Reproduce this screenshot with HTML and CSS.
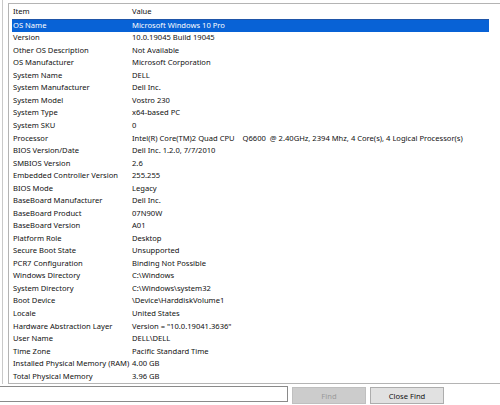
FILE: index.html
```html
<!DOCTYPE html>
<html>
<head>
<meta charset="utf-8">
<link rel="stylesheet" href="styles.css">
</head>
<body>
<div class="window">
  <div class="main">
    <div class="tree-edge"></div>
    <div class="list">
      <div class="row header"><span class="c1">Item</span><span class="c2">Value</span></div>
      <div class="row selected"><span class="c1">OS Name</span><span class="c2">Microsoft Windows 10 Pro</span></div>
      <div class="row"><span class="c1">Version</span><span class="c2">10.0.19045 Build 19045</span></div>
      <div class="row"><span class="c1">Other OS Description</span><span class="c2">Not Available</span></div>
      <div class="row"><span class="c1">OS Manufacturer</span><span class="c2">Microsoft Corporation</span></div>
      <div class="row"><span class="c1">System Name</span><span class="c2">DELL</span></div>
      <div class="row"><span class="c1">System Manufacturer</span><span class="c2">Dell Inc.</span></div>
      <div class="row"><span class="c1">System Model</span><span class="c2">Vostro 230</span></div>
      <div class="row"><span class="c1">System Type</span><span class="c2">x64-based PC</span></div>
      <div class="row"><span class="c1">System SKU</span><span class="c2">0</span></div>
      <div class="row"><span class="c1">Processor</span><span class="c2">Intel(R) Core(TM)2 Quad CPU    Q6600  @ 2.40GHz, 2394 Mhz, 4 Core(s), 4 Logical Processor(s)</span></div>
      <div class="row"><span class="c1">BIOS Version/Date</span><span class="c2">Dell Inc. 1.2.0, 7/7/2010</span></div>
      <div class="row"><span class="c1">SMBIOS Version</span><span class="c2">2.6</span></div>
      <div class="row"><span class="c1">Embedded Controller Version</span><span class="c2">255.255</span></div>
      <div class="row"><span class="c1">BIOS Mode</span><span class="c2">Legacy</span></div>
      <div class="row"><span class="c1">BaseBoard Manufacturer</span><span class="c2">Dell Inc.</span></div>
      <div class="row"><span class="c1">BaseBoard Product</span><span class="c2">07N90W</span></div>
      <div class="row"><span class="c1">BaseBoard Version</span><span class="c2">A01</span></div>
      <div class="row"><span class="c1">Platform Role</span><span class="c2">Desktop</span></div>
      <div class="row"><span class="c1">Secure Boot State</span><span class="c2">Unsupported</span></div>
      <div class="row"><span class="c1">PCR7 Configuration</span><span class="c2">Binding Not Possible</span></div>
      <div class="row"><span class="c1">Windows Directory</span><span class="c2">C:\Windows</span></div>
      <div class="row"><span class="c1">System Directory</span><span class="c2">C:\Windows\system32</span></div>
      <div class="row"><span class="c1">Boot Device</span><span class="c2">\Device\HarddiskVolume1</span></div>
      <div class="row"><span class="c1">Locale</span><span class="c2">United States</span></div>
      <div class="row"><span class="c1">Hardware Abstraction Layer</span><span class="c2">Version = "10.0.19041.3636"</span></div>
      <div class="row"><span class="c1">User Name</span><span class="c2">DELL\DELL</span></div>
      <div class="row"><span class="c1">Time Zone</span><span class="c2">Pacific Standard Time</span></div>
      <div class="row"><span class="c1">Installed Physical Memory (RAM)</span><span class="c2">4.00 GB</span></div>
      <div class="row"><span class="c1">Total Physical Memory</span><span class="c2">3.96 GB</span></div>
    </div>
  </div>
  <div class="findbar">
    <div class="input"></div>
    <button class="btn disabled">Find</button>
    <button class="btn">Close Find</button>
  </div>
</div>
</body>
</html>
```

FILE: styles.css
```css
html, body {
  margin: 0;
  padding: 0;
  background: #ffffff;
  overflow: hidden;
}
.window {
  width: 500px;
  height: 405px;
  display: flex;
  flex-direction: column;
  font-family: "Noto Sans", "Open Sans", sans-serif;
  font-size: 7.6px;
  color: #111111;
}
.main {
  height: 384px;
  display: flex;
}
.tree-edge {
  width: 2px;
  flex: none;
  border-right: 1px solid #c9c9c9;
}
.list {
  flex: 1;
  margin-left: 5px;
  margin-top: 3px;
  margin-right: -10px;
  border: 1px solid #b4b4b4;
  padding-left: 3px;
  display: flex;
  flex-direction: column;
}
.row {
  height: 12.54px;
  display: flex;
  align-items: center;
  padding-left: 1px;
  margin-right: 20px;
  white-space: pre;
  line-height: 11px;
}
.row.header {
  height: 15px;
}
.row.selected {
  background: #0862d6;
  color: #ffffff;
  box-shadow: inset 0 1px 0 #1f55a8;
}
.c1 {
  width: 119px;
  flex: none;
}
.c2 {
  flex: none;
}
.findbar {
  flex: 1;
  display: flex;
  align-items: flex-start;
  gap: 4px;
  padding-top: 2px;
}
.input {
  width: 287px;
  height: 14px;
  margin-left: -1px;
  border: 1px solid #8a8a8a;
  background: #ffffff;
}
.btn {
  width: 74px;
  height: 17px;
  margin-top: 1px;
  padding: 0;
  font-family: inherit;
  font-size: 7.6px;
  color: #111111;
  background: #e1e1e1;
  border: 1px solid #adadad;
  border-radius: 0;
}
.btn.disabled {
  background: #cccccc;
  border-color: #bfbfbf;
  color: #9a9a9a;
}
```
